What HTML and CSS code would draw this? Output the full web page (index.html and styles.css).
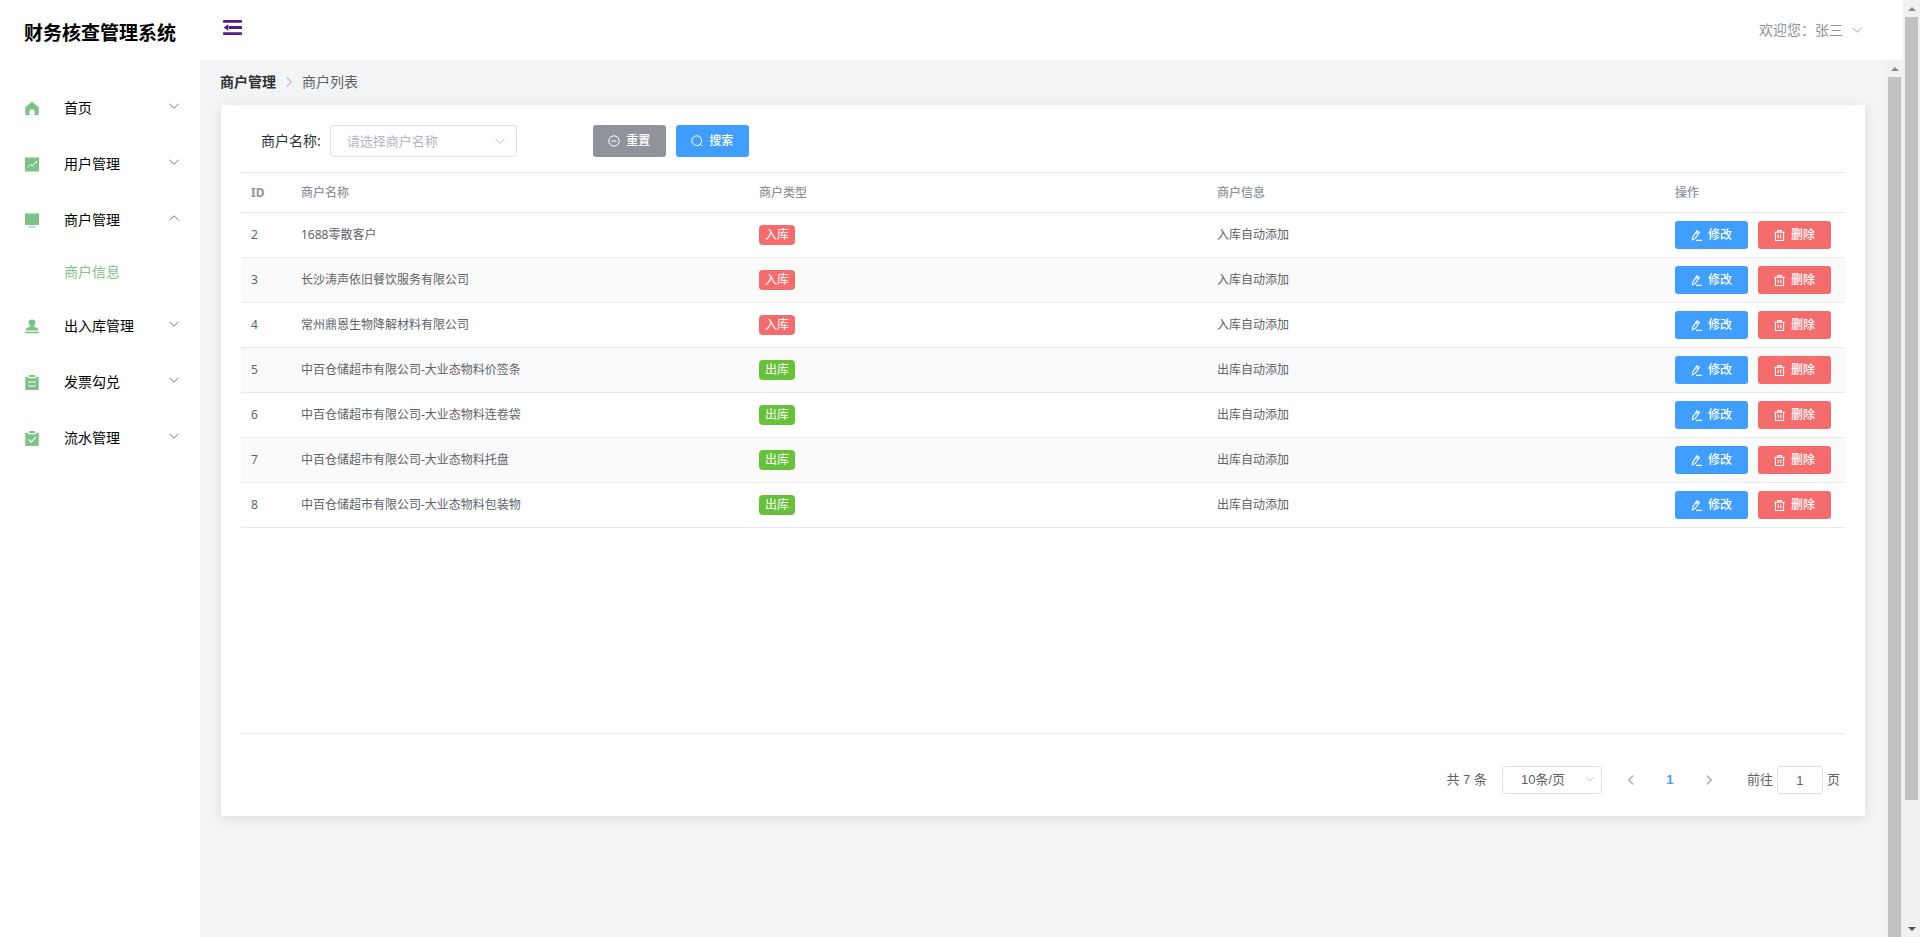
FILE: index.html
```html
<!DOCTYPE html>
<html lang="zh-CN">
<head>
<meta charset="utf-8">
<title>财务核查管理系统</title>
<link rel="stylesheet" href="styles.css">
</head>
<body>
<svg class="sprite" aria-hidden="true">
  <symbol id="down" viewBox="0 0 16 16"><path d="M2 5l6 6 6-6" fill="none" stroke="currentColor" stroke-width="1.1"/></symbol>
  <symbol id="up" viewBox="0 0 16 16"><path d="M2 11l6-6 6 6" fill="none" stroke="currentColor" stroke-width="1.1"/></symbol>
  <symbol id="right" viewBox="0 0 16 16"><path d="M5 2l6 6-6 6" fill="none" stroke="currentColor" stroke-width="1.900"/></symbol>
  <symbol id="left" viewBox="0 0 16 16"><path d="M11 2L5 8l6 6" fill="none" stroke="currentColor" stroke-width="1.900"/></symbol>
  <symbol id="fold" viewBox="0 0 20 16"><path d="M0 0h20v3H0zM6 6.500h14v3H6zM0 13h20v3H0zM5.500 4.500v7L0.500 8z" fill="currentColor"/></symbol>
  <symbol id="home" viewBox="0 0 14 14"><path d="M7 0.300L13.700 5.700V13.500H9.500V9.500Q9.500 7.800 7 7.800T4.500 9.500V13.500H0.300V5.700Z" fill="currentColor"/></symbol>
  <symbol id="chart" viewBox="0 0 14 14"><path d="M0 0h14v14H0z" fill="currentColor"/><path d="M2.500 10l3-3 2 1.500 3.500-4M10.500 4h1v1" fill="none" stroke="#fff" stroke-width="1"/></symbol>
  <symbol id="monitor" viewBox="0 0 14 14"><path d="M0 0h14v11.500H0zM3 14q0-1.300 4-1.300t4 1.300z" fill="currentColor"/></symbol>
  <symbol id="stamp" viewBox="0 0 14 14"><path d="M7 0a3.400 3.400 0 0 1 3.400 3.400C10.400 5 8.800 5.500 8.800 7.500Q13.500 7.800 13.500 11H0.500Q0.500 7.800 5.200 7.500C5.200 5.500 3.600 5 3.600 3.400A3.400 3.400 0 0 1 7 0zM0.300 12.300h13.400V13.700H0.300z" fill="currentColor"/></symbol>
  <symbol id="list" viewBox="0 0 14 15"><path d="M0.300 1.800H3v1.400h8V1.800h2.700V15H0.300zM4 0h6v2H4z" fill="currentColor"/><path d="M3.500 7h7M3.500 11h7" stroke="#fff" stroke-width="1.200"/></symbol>
  <symbol id="check" viewBox="0 0 14 15"><path d="M0.300 1.800H3v1.400h8V1.800h2.700V15H0.300zM4 0h6v2H4z" fill="currentColor"/><path d="M3.500 8.500l2.700 2.700 4.500-5" fill="none" stroke="#fff" stroke-width="1.200"/></symbol>
  <symbol id="remove" viewBox="0 0 12 12"><g fill="none" stroke="currentColor"><circle cx="6" cy="6" r="5.200"/><path d="M3.500 6h5"/></g></symbol>
  <symbol id="search" viewBox="0 0 12 12"><g fill="none" stroke="currentColor"><circle cx="5.700" cy="5.700" r="4.900"/><path d="M9 9l2.300 2.300"/></g></symbol>
  <symbol id="edit" viewBox="0 0 12 12"><g fill="none" stroke="currentColor" stroke-width="1.200"><path d="M1.500 10.800L2 7.500 6.500 0.900 9.200 2.700 4.700 9.200ZM5.500 2.500L8 4.300M5.500 11.300H12"/></g></symbol>
  <symbol id="trash" viewBox="0 0 12 12"><g fill="none" stroke="currentColor" stroke-width="1.200"><path d="M0.300 2.500h11.400M4 2.500V0.700h4V2.500M1.600 2.500V11.400h8.800V2.500M4.600 4.800v4.200M7.400 4.800v4.200"/></g></symbol>
</svg>
<div class="viewport">
  <aside class="sidebar">
    <h1 class="brand">财务核查管理系统</h1>
    <nav class="menu">
      <button class="menu-item" type="button"><svg class="menu-icon"><use href="#home"/></svg><span>首页</span><svg class="menu-arrow"><use href="#down"/></svg></button>
      <button class="menu-item" type="button"><svg class="menu-icon"><use href="#chart"/></svg><span>用户管理</span><svg class="menu-arrow"><use href="#down"/></svg></button>
      <button class="menu-item" type="button" aria-expanded="true"><svg class="menu-icon"><use href="#monitor"/></svg><span>商户管理</span><svg class="menu-arrow"><use href="#up"/></svg></button>
      <a class="submenu-item" href="#">商户信息</a>
      <button class="menu-item" type="button"><svg class="menu-icon"><use href="#stamp"/></svg><span>出入库管理</span><svg class="menu-arrow"><use href="#down"/></svg></button>
      <button class="menu-item" type="button"><svg class="menu-icon"><use href="#list"/></svg><span>发票勾兑</span><svg class="menu-arrow"><use href="#down"/></svg></button>
      <button class="menu-item" type="button"><svg class="menu-icon"><use href="#check"/></svg><span>流水管理</span><svg class="menu-arrow"><use href="#down"/></svg></button>
    </nav>
  </aside>
  <div class="workspace">
    <header class="topbar">
      <a class="fold" href="#" aria-label="折叠菜单"><svg><use href="#fold"/></svg></a>
      <button class="user" type="button">欢迎您：张三<svg><use href="#down"/></svg></button>
    </header>
    <div class="content">
      <main class="main">
        <nav class="breadcrumb"><a href="#">商户管理</a><svg><use href="#right"/></svg><span>商户列表</span></nav>
        <section class="card">
          <form class="filter">
            <label for="merchant">商户名称:</label>
            <div class="select filter-select">
              <select id="merchant"><option>请选择商户名称</option></select>
              <svg><use href="#down"/></svg>
            </div>
            <div class="buttons">
              <button class="btn info" type="button"><svg><use href="#remove"/></svg>重置</button>
              <button class="btn primary" type="button"><svg><use href="#search"/></svg>搜索</button>
            </div>
          </form>
          <div class="table-wrap">
            <table class="table">
              <thead><tr><th class="col-id">ID</th><th>商户名称</th><th>商户类型</th><th>商户信息</th><th class="col-ops">操作</th></tr></thead>
              <tbody>
                <tr><td>2</td><td>1688零散客户</td><td><span class="tag in">入库</span></td><td>入库自动添加</td><td><div class="buttons"><button class="btn small primary" type="button"><svg><use href="#edit"/></svg>修改</button><button class="btn small danger" type="button"><svg><use href="#trash"/></svg>删除</button></div></td></tr>
                <tr><td>3</td><td>长沙涛声依旧餐饮服务有限公司</td><td><span class="tag in">入库</span></td><td>入库自动添加</td><td><div class="buttons"><button class="btn small primary" type="button"><svg><use href="#edit"/></svg>修改</button><button class="btn small danger" type="button"><svg><use href="#trash"/></svg>删除</button></div></td></tr>
                <tr><td>4</td><td>常州鼎恩生物降解材料有限公司</td><td><span class="tag in">入库</span></td><td>入库自动添加</td><td><div class="buttons"><button class="btn small primary" type="button"><svg><use href="#edit"/></svg>修改</button><button class="btn small danger" type="button"><svg><use href="#trash"/></svg>删除</button></div></td></tr>
                <tr><td>5</td><td>中百仓储超市有限公司-大业态物料价签条</td><td><span class="tag out">出库</span></td><td>出库自动添加</td><td><div class="buttons"><button class="btn small primary" type="button"><svg><use href="#edit"/></svg>修改</button><button class="btn small danger" type="button"><svg><use href="#trash"/></svg>删除</button></div></td></tr>
                <tr><td>6</td><td>中百仓储超市有限公司-大业态物料连卷袋</td><td><span class="tag out">出库</span></td><td>出库自动添加</td><td><div class="buttons"><button class="btn small primary" type="button"><svg><use href="#edit"/></svg>修改</button><button class="btn small danger" type="button"><svg><use href="#trash"/></svg>删除</button></div></td></tr>
                <tr><td>7</td><td>中百仓储超市有限公司-大业态物料托盘</td><td><span class="tag out">出库</span></td><td>出库自动添加</td><td><div class="buttons"><button class="btn small primary" type="button"><svg><use href="#edit"/></svg>修改</button><button class="btn small danger" type="button"><svg><use href="#trash"/></svg>删除</button></div></td></tr>
                <tr><td>8</td><td>中百仓储超市有限公司-大业态物料包装物</td><td><span class="tag out">出库</span></td><td>出库自动添加</td><td><div class="buttons"><button class="btn small primary" type="button"><svg><use href="#edit"/></svg>修改</button><button class="btn small danger" type="button"><svg><use href="#trash"/></svg>删除</button></div></td></tr>
              </tbody>
            </table>
          </div>
          <div class="pagination">
            <span>共 7 条</span>
            <div class="select page-size">
              <select aria-label="每页条数"><option>10条/页</option></select>
              <svg><use href="#down"/></svg>
            </div>
            <div class="pager">
              <button type="button" aria-label="上一页"><svg><use href="#left"/></svg></button>
              <button type="button" class="current">1</button>
              <button type="button" aria-label="下一页"><svg><use href="#right"/></svg></button>
            </div>
            <div class="jump"><label for="page">前往</label><input id="page" type="text" value="1"><span>页</span></div>
          </div>
        </section>
      </main>
      <div class="scrollbar inner" aria-hidden="true"><i class="arrow-up"></i><i class="thumb"></i></div>
    </div>
  </div>
  <div class="scrollbar" aria-hidden="true"><i class="arrow-up"></i><i class="thumb"></i><i class="rest"></i><i class="arrow-down"></i></div>
</div>
</body>
</html>
```
FILE: styles.css
```css
* { box-sizing: border-box; }

body {
  margin: 0;
  color: #303133;
  background: #fff;
  font: 14px/20px "Noto Sans", "Noto Sans CJK SC", sans-serif;
}

button, input, select { font: inherit; color: inherit; margin: 0; }
button { border: 0; background: none; padding: 0; cursor: pointer; }
a { color: inherit; text-decoration: none; }
svg { flex: none; display: block; }
.sprite { display: none; }

.viewport { display: flex; min-height: 100vh; }

/* Sidebar */
.sidebar { flex: none; width: 200px; background: #fff; }
.brand {
  margin: 0 0 14px;
  height: 66px;
  font-size: 19px;
  line-height: 66px;
  font-weight: 700;
  text-align: center;
  color: #000;
}
.menu { display: flex; flex-direction: column; color: #000; }
.menu-item {
  display: flex;
  align-items: center;
  height: 56px;
  padding: 0 20px 0 25px;
  text-align: left;
}
.menu-item span { flex: 1; }
.menu-icon { width: 14px; height: 15px; margin-right: 25px; color: #7dc383; }
.menu-arrow { width: 12px; height: 12px; margin-bottom: 4px; color: #555; }
.submenu-item { height: 50px; padding-left: 64px; line-height: 48px; color: #7dc383; }

/* Top bar */
.workspace { flex: 1; min-width: 0; display: flex; flex-direction: column; }
.topbar {
  display: flex;
  justify-content: space-between;
  height: 60px;
  padding: 0 40px 0 23px;
}
.fold { padding-top: 20px; color: #551a8b; }
.fold svg { width: 19px; height: 15px; }
.user { display: flex; align-items: center; gap: 8px; color: #909399; }
.user svg { width: 12px; height: 12px; }

/* Content */
.content { flex: 1; display: flex; background: #f3f4f6; }
.main { flex: 1; min-width: 0; padding: 12px 20px 20px; }
.breadcrumb { display: flex; align-items: center; margin-bottom: 13px; color: #606266; }
.breadcrumb a { font-weight: 700; color: #303133; }
.breadcrumb svg { width: 12px; height: 12px; margin: 0 7px; color: #c0c4cc; }
.card {
  margin: 0 1px;
  padding: 20px 20px 22px;
  background: #fff;
  box-shadow: 0 2px 12px rgba(0, 0, 0, .1);
}

.filter { display: flex; align-items: center; margin-bottom: 15px; padding-left: 20px; }
.filter-select { width: 187px; height: 32px; margin: 0 76px 0 9px; }
.select { position: relative; font-size: 13px; }
.select select {
  width: 100%;
  height: 100%;
  padding: 0 16px;
  appearance: none;
  border: 1px solid #dcdfe6;
  border-radius: 4px;
  background: #fff;
}
.filter-select select { color: #b4b7be; }
.select svg {
  position: absolute;
  top: 50%;
  right: 11px;
  width: 12px;
  height: 12px;
  margin-top: -6px;
  color: #a8abb2;
  pointer-events: none;
}

.buttons { display: flex; gap: 10px; }
.btn {
  display: flex;
  align-items: center;
  justify-content: center;
  gap: 6px;
  width: 73px;
  height: 32px;
  border-radius: 3px;
  color: #fff;
  font-size: 12px;
  font-weight: 500;
}
.btn svg { width: 12px; height: 12px; }
.small svg { width: 11px; height: 11px; }
.small { height: 28px; }
.primary { background: #409eff; }
.info { background: #909399; }
.danger { background: #f56c6c; }

/* Table */
.table-wrap { min-height: 562px; border: solid #e8eaee; border-width: 1px 0; }
.table {
  width: 100%;
  table-layout: fixed;
  border-collapse: separate;
  border-spacing: 0;
  font-size: 12px;
  color: #606266;
}
.table th, .table td { padding: 0 10px; text-align: left; border-bottom: 1px solid #e8eaee; }
.table th { height: 40px; font-weight: 500; color: #909399; }
.table td { height: 45px; }
.table .col-id { width: 50px; font-weight: 700; }
.table .col-ops { width: 180px; }
.table tbody tr:nth-child(even) { background: #fafafa; }
.tag {
  display: block;
  width: 36px;
  border-radius: 4px;
  color: #fff;
  text-align: center;
}
.in { background: #f56c6c; }
.out { background: #67c23a; }

/* Pagination */
.pagination {
  display: flex;
  align-items: center;
  justify-content: flex-end;
  padding: 32px 5px 0 0;
  font: 13px/20px "Liberation Sans", "Noto Sans CJK SC", sans-serif;
  color: #606266;
}
.page-size { width: 100px; height: 28px; margin: 0 10px 0 15px; }
.page-size select { padding: 0 18px; }
.page-size svg { right: 7px; width: 10px; height: 10px; }
.pager { display: flex; gap: 1px; margin-right: 19px; }
.pager button { display: flex; align-items: center; justify-content: center; width: 38px; height: 28px; color: #a8abb2; }
.pager svg { width: 12px; height: 12px; }
.pager .current { color: #409eff; font-weight: 700; }
.jump { display: flex; align-items: center; gap: 4px; }
.jump input {
  width: 46px;
  height: 28px;
  padding: 0;
  border: 1px solid #dcdfe6;
  border-radius: 4px;
  text-align: center;
}

/* Scroll tracks */
.scrollbar { flex: none; display: flex; flex-direction: column; width: 17px; padding: 0 2px; background: #f1f1f1; }
.arrow-up, .arrow-down { flex: none; display: flex; align-items: center; justify-content: center; height: 17px; }
.arrow-up::before, .arrow-down::after { content: ""; border: 4px solid transparent; }
.arrow-up::before { border-top: 0; border-bottom-color: #8a8a8a; }
.arrow-down::after { border-bottom: 0; border-top-color: #505050; }
.thumb { flex: 783; background: #c1c1c1; }
.rest { flex: 120; }
```
